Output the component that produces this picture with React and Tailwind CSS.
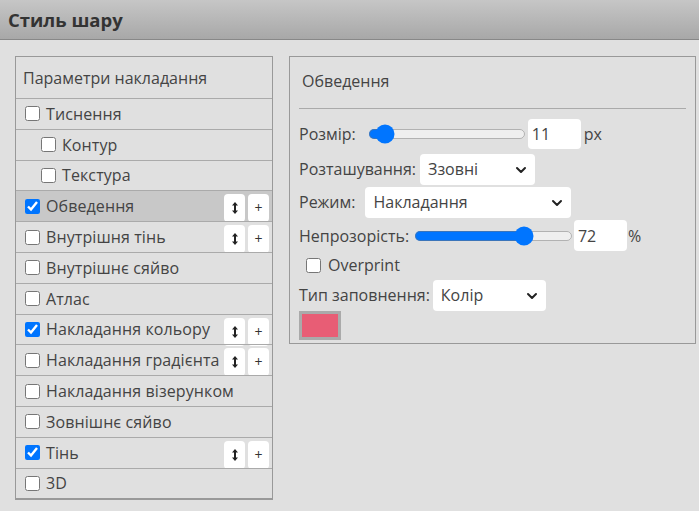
import { ChevronDown } from 'lucide-react'

const layers = [
  { name: 'Тиснення', checked: false },
  { name: 'Контур', checked: false, sub: true },
  { name: 'Текстура', checked: false, sub: true },
  { name: 'Обведення', checked: true, active: true, tools: true },
  { name: 'Внутрішня тінь', checked: false, tools: true },
  { name: 'Внутрішнє сяйво', checked: false },
  { name: 'Атлас', checked: false },
  { name: 'Накладання кольору', checked: true, tools: true },
  { name: 'Накладання градієнта', checked: false, tools: true },
  { name: 'Накладання візерунком', checked: false },
  { name: 'Зовнішнє сяйво', checked: false },
  { name: 'Тінь', checked: true, tools: true },
  { name: '3D', checked: false },
]

function UpDown() {
  return (
    <svg width="6" height="12" viewBox="0 0 6 12" className="mx-auto">
      <path d="M3 0 L6 3.5 H4 V8.5 H6 L3 12 L0 8.5 H2 V3.5 H0 Z" fill="#222" />
    </svg>
  )
}

function LayerRow({ layer }) {
  return (
    <div
      className={`relative h-[30.8px] flex items-center border-t border-[#aaaaaa] ${
        layer.active ? 'bg-[#c8c8c8]' : ''
      } ${layer.sub ? 'pl-[25px]' : 'pl-[9px]'}`}
    >
      <input type="checkbox" defaultChecked={layer.checked} className="w-[15px] h-[15px] m-0 mr-[6px]" />
      <span className="whitespace-nowrap tracking-[0.1px]">{layer.name}</span>
      {layer.tools && (
        <div className="absolute right-[3px] top-[3px] flex gap-[3px]">
          <button className="w-[21px] h-[28px] bg-white rounded-[4px] flex items-center justify-center">
            <UpDown />
          </button>
          <button className="w-[21px] h-[28px] bg-white rounded-[4px] text-[14px] text-[#333] leading-none">+</button>
        </div>
      )}
    </div>
  )
}

function Select({ value, width }) {
  return (
    <div className={`relative ${width} h-[31px] bg-white rounded-[4px] flex items-center pl-[8px]`}>
      <span>{value}</span>
      <ChevronDown size={16} strokeWidth={3} className="absolute right-[6px] top-[8px] text-[#222]" />
    </div>
  )
}

export default function App() {
  return (
    <div
      className="w-[699px] h-[511px] bg-[#e0e0e0] text-[#444] text-[16px] overflow-hidden"
      style={{ fontFamily: '"Open Sans", sans-serif' }}
    >
      <header className="h-[40px] bg-gradient-to-b from-[#c6c6c6] to-[#a8a8a8] border-b border-[#888] flex items-center pl-[8px]">
        <h1 className="text-[18.5px] font-bold text-[#333]">Стиль шару</h1>
      </header>

      <div className="flex items-start pt-[16px] pl-[15px]">
        <div className="w-[258px] border border-[#999] border-b-2 border-b-[#999]">
          <div className="h-[41px] flex items-center pl-[7px]">Параметри накладання</div>
          {layers.map((l) => (
            <LayerRow key={l.name} layer={l} />
          ))}
        </div>

        <div className="ml-[16px] w-[407px] h-[288px] border border-[#999] px-[9px]">
          <div className="h-[51px] flex items-end pb-[15px] pl-[3px]">Обведення</div>
          <div className="border-t border-[#aaa] mb-[10px]" />

          <div className="flex items-center h-[30px]">
            <span>Розмір:</span>
            <input type="range" min="0" max="100" defaultValue="5" className="ml-[10px] w-[126px] m-0 [zoom:1.25]" />
            <div className="ml-[2px] w-[53px] h-[30px] bg-white rounded-[4px] flex items-center pl-[4px]">11</div>
            <span className="ml-[3px]">px</span>
          </div>

          <div className="flex items-center h-[32px] mt-[4px]">
            <span>Розташування:</span>
            <div className="ml-[4px]">
              <Select value="Ззовні" width="w-[115px]" />
            </div>
          </div>

          <div className="flex items-center h-[32px] mt-[1px]">
            <span>Режим:</span>
            <div className="ml-[10px]">
              <Select value="Накладання" width="w-[206px]" />
            </div>
          </div>

          <div className="flex items-center h-[31px] mt-[2px]">
            <span>Непрозорість:</span>
            <input type="range" min="0" max="100" defaultValue="72" className="ml-[4px] w-[127px] m-0 [zoom:1.25]" />
            <div className="ml-[1px] w-[53px] h-[31px] bg-white rounded-[4px] flex items-center pl-[4px]">72</div>
            <span className="ml-[1px]">%</span>
          </div>

          <div className="flex items-center h-[26px] mt-[1px] pl-[7px]">
            <input type="checkbox" className="w-[15px] h-[15px] m-0 mr-[7px]" />
            <span>Overprint</span>
          </div>

          <div className="flex items-center h-[32px] mt-[1px]">
            <span>Тип заповнення:</span>
            <div className="ml-[3px]">
              <Select value="Колір" width="w-[113px]" />
            </div>
          </div>

          <div className="w-[42px] h-[29px] border-[3px] border-[#aaaaaa] bg-[#e85d75]" />
        </div>
      </div>
    </div>
  )
}
